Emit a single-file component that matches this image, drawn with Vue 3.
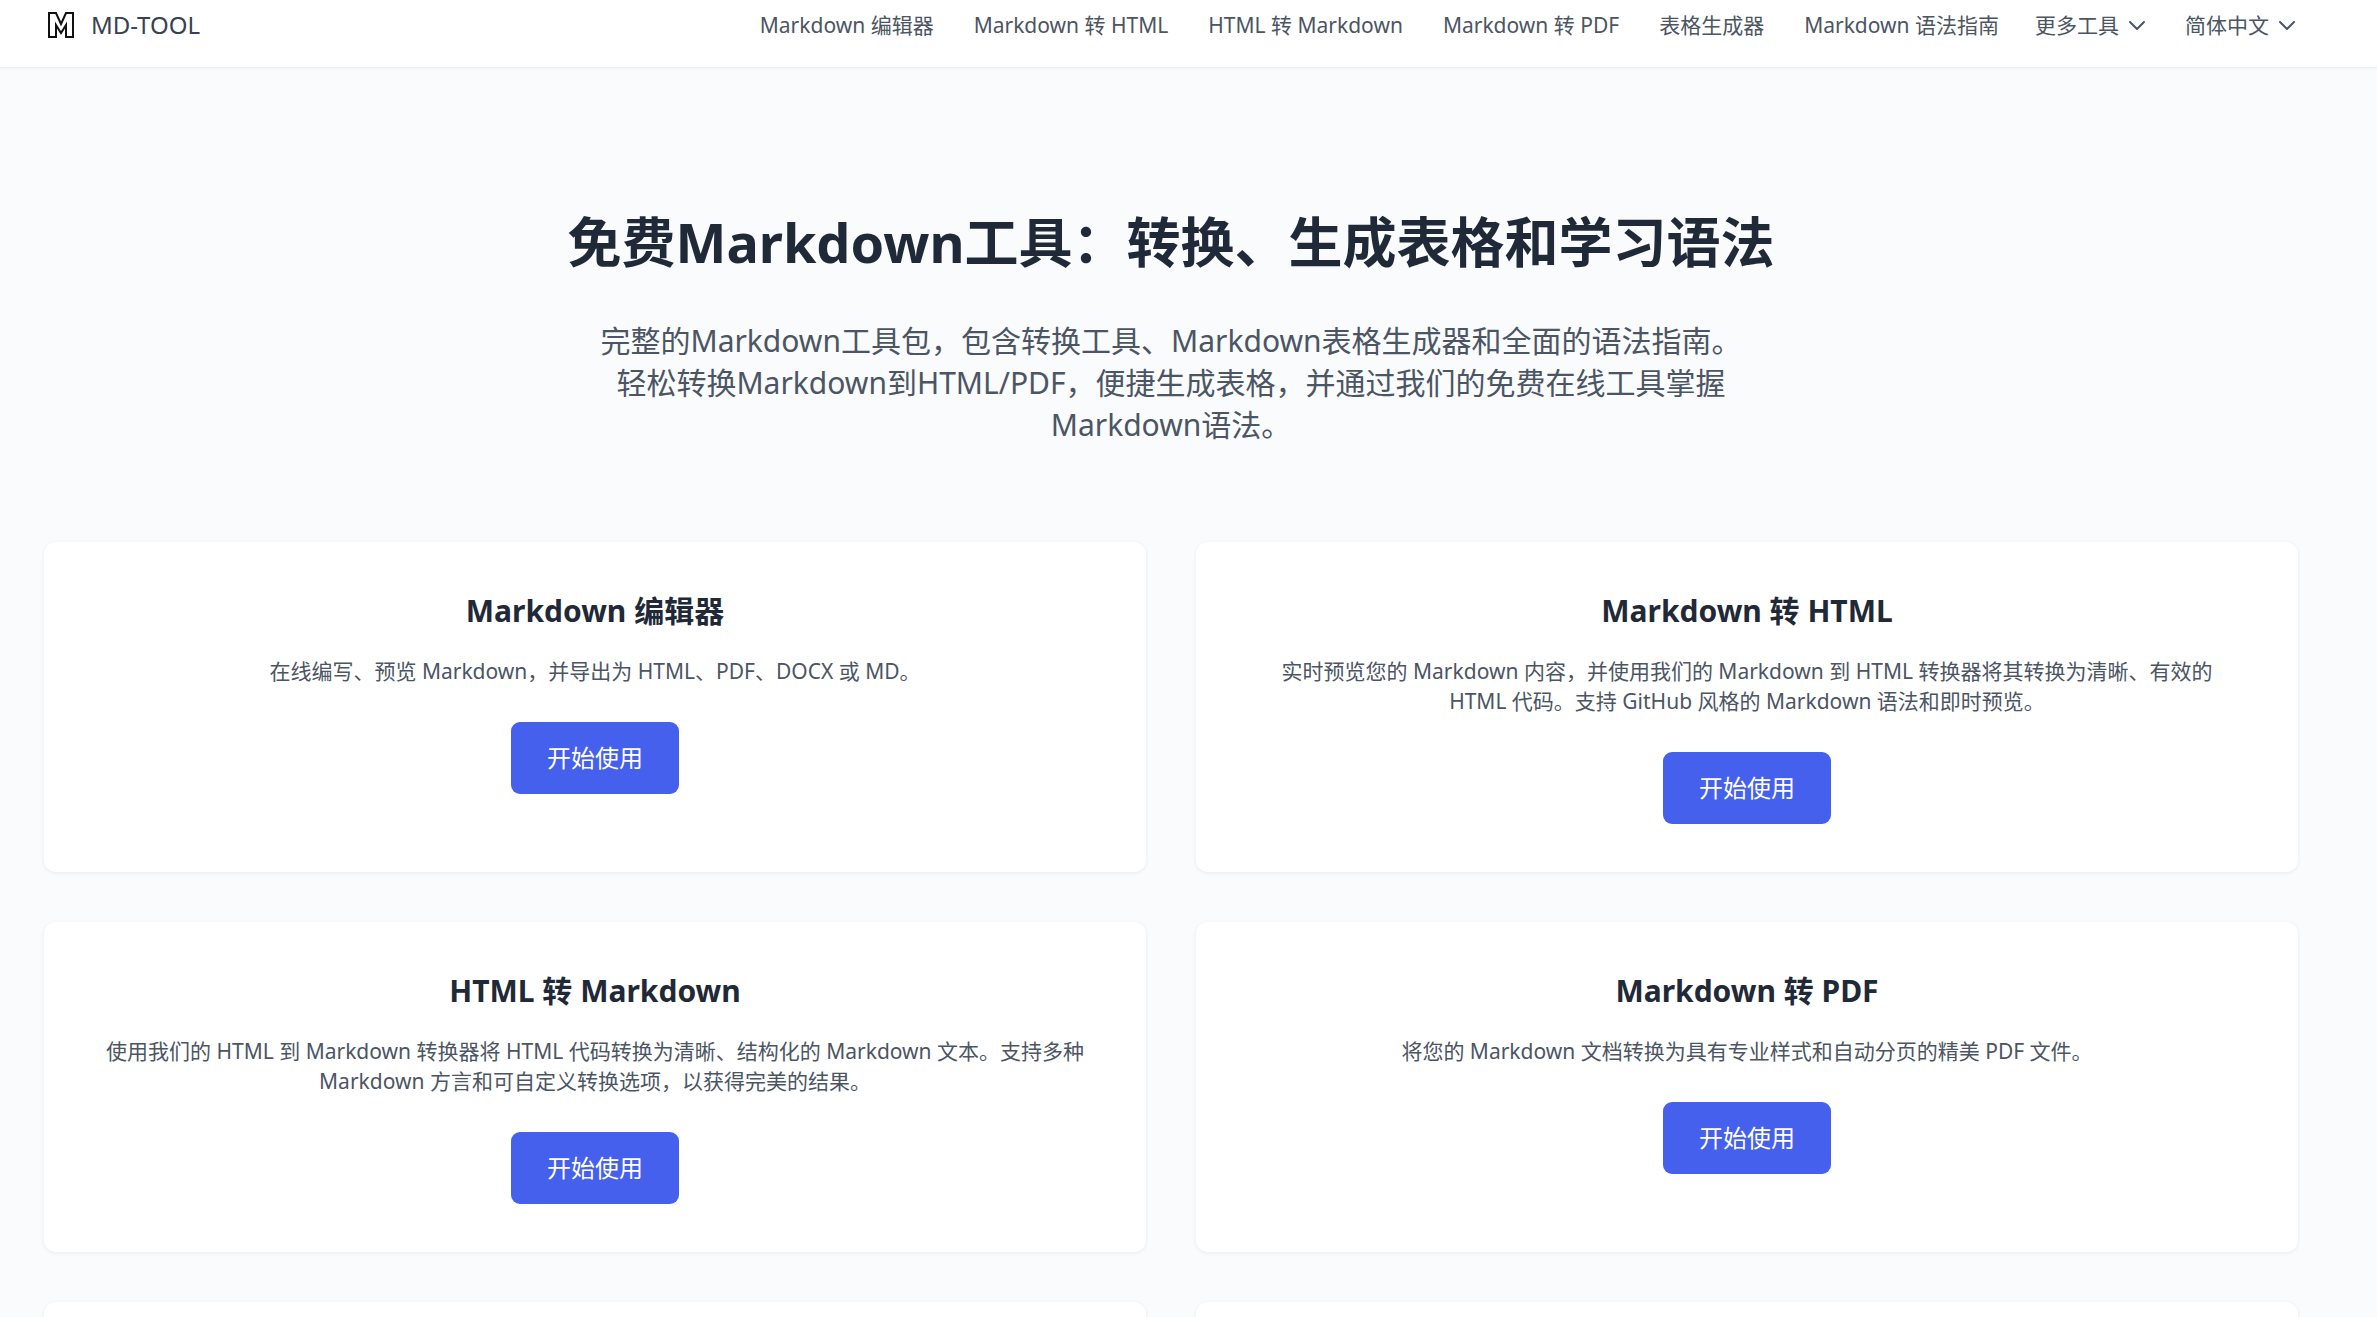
<script setup>
const links = [
  'Markdown 编辑器',
  'Markdown 转 HTML',
  'HTML 转 Markdown',
  'Markdown 转 PDF',
  '表格生成器',
  'Markdown 语法指南',
]

const tools = [
  { title: 'Markdown 编辑器', text: '在线编写、预览 Markdown，并导出为 HTML、PDF、DOCX 或 MD。' },
  {
    title: 'Markdown 转 HTML',
    text: '实时预览您的 Markdown 内容，并使用我们的 Markdown 到 HTML 转换器将其转换为清晰、有效的 HTML 代码。支持 GitHub 风格的 Markdown 语法和即时预览。',
  },
  {
    title: 'HTML 转 Markdown',
    text: '使用我们的 HTML 到 Markdown 转换器将 HTML 代码转换为清晰、结构化的 Markdown 文本。支持多种 Markdown 方言和可自定义转换选项，以获得完美的结果。',
  },
  { title: 'Markdown 转 PDF', text: '将您的 Markdown 文档转换为具有专业样式和自动分页的精美 PDF 文件。' },
]
</script>

<template>
  <div class="page" lang="zh-CN">
    <header class="header">
      <a class="brand" href="#">
        <svg class="logo" viewBox="0 0 26 26" aria-hidden="true">
          <path d="M1 1H8L13 12L18 1H25V25H18V13L13 21L8 13V25H1Z" />
        </svg>
        <span>MD-TOOL</span>
      </a>
      <nav class="nav">
        <div class="links">
          <a v-for="link in links" :key="link" href="#">{{ link }}</a>
        </div>
        <button type="button" class="more">
          更多工具
          <svg class="chevron" viewBox="0 0 24 24" aria-hidden="true"><path d="M5 9l7 7 7-7" /></svg>
        </button>
        <div class="language">
          <select aria-label="语言">
            <option>简体中文</option>
          </select>
          <svg class="chevron" viewBox="0 0 24 24" aria-hidden="true"><path d="M5 9l7 7 7-7" /></svg>
        </div>
      </nav>
    </header>

    <main class="main">
      <section class="hero">
        <h1>免费Markdown工具：转换、生成表格和学习语法</h1>
        <p>完整的Markdown工具包，包含转换工具、Markdown表格生成器和全面的语法指南。轻松转换Markdown到HTML/PDF，便捷生成表格，并通过我们的免费在线工具掌握Markdown语法。</p>
      </section>

      <section class="grid">
        <article v-for="tool in tools" :key="tool.title" class="card">
          <h2>{{ tool.title }}</h2>
          <p>{{ tool.text }}</p>
          <button type="button" class="start">开始使用</button>
        </article>
        <article class="card"></article>
        <article class="card"></article>
      </section>
    </main>
  </div>
</template>

<style>
body {
  background: #fafbfd;
}
</style>

<style scoped>
.page {
  height: 100vh;
  overflow: hidden;
  background: #fafbfd;
  color: #4b5563;
  font-family: "Noto Sans", "Noto Sans CJK SC", sans-serif;
}

.header {
  display: flex;
  align-items: flex-start;
  justify-content: space-between;
  box-sizing: border-box;
  height: 68px;
  padding: 7px 78px 0 48px;
  background: #fff;
  border-bottom: 1px solid #eceef1;
  box-shadow: 0 1px 3px rgba(0, 0, 0, 0.04);
}

.brand {
  display: flex;
  align-items: center;
  gap: 17px;
  color: #374151;
  font-size: 24px;
  line-height: 36px;
  text-decoration: none;
}

.logo {
  width: 26px;
  height: 26px;
  fill: none;
  stroke: #111;
  stroke-width: 2;
}

.nav {
  display: flex;
  align-items: center;
  gap: 36px;
  font-size: 21px;
  line-height: 36px;
}

.links {
  display: flex;
  gap: 40px;
}

.nav a {
  color: inherit;
  text-decoration: none;
}

.more,
.language {
  display: flex;
  align-items: center;
  gap: 6px;
}

button,
select {
  margin: 0;
  padding: 0;
  border: 0;
  background: none;
  color: inherit;
  font: inherit;
}

select {
  appearance: none;
}

.chevron {
  width: 24px;
  height: 24px;
  fill: none;
  stroke: currentColor;
  stroke-width: 2;
  stroke-linecap: round;
  stroke-linejoin: round;
}

.main {
  padding: 144px 79px 48px 44px;
}

.hero {
  margin-bottom: 96px;
  text-align: center;
}

h1 {
  margin: 0 0 48px;
  color: #1f2937;
  font-size: 54px;
  line-height: 60px;
  font-weight: 700;
}

.hero p {
  max-width: 1152px;
  margin: 0 auto;
  font-size: 30px;
  line-height: 42px;
}

.grid {
  display: grid;
  grid-template-columns: 1fr 1fr;
  gap: 50px;
}

.card {
  padding: 48px 59px;
  border-radius: 12px;
  background: #fff;
  box-shadow: 0 1px 4px rgba(0, 0, 0, 0.07);
  text-align: center;
}

h2 {
  margin: 0 0 24px;
  color: #1f2937;
  font-size: 30px;
  line-height: 42px;
  font-weight: 700;
}

.card p {
  margin: 0 0 36px;
  font-size: 21px;
  line-height: 30px;
}

.start {
  padding: 18px 36px;
  border-radius: 9px;
  background: #4560ec;
  color: #fff;
  font-size: 24px;
  line-height: 36px;
}
</style>
